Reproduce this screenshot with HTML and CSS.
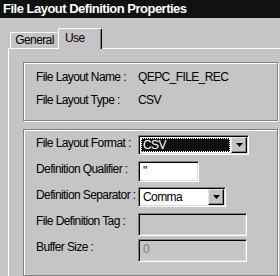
FILE: index.html
```html
<!DOCTYPE html>
<html lang="en">

<head>
    <meta charset="UTF-8">
    <title>File Layout Definition Properties</title>
    <link rel="stylesheet" href="styles.css">
</head>

<body>
    <div class="titlebar">File Layout Definition Properties</div>

    <div class="tabs">
        <div class="tab tab-general">General</div>
        <div class="tab tab-use">Use</div>
    </div>

    <div class="panel">
        <div class="group group-info">
            <div class="row">
                <span class="label">File Layout Name :</span>
                <span class="value">QEPC_FILE_REC</span>
            </div>
            <div class="row">
                <span class="label">File Layout Type :</span>
                <span class="value">CSV</span>
            </div>
        </div>

        <div class="group group-props">
            <div class="row row-tall">
                <span class="label">File Layout Format :</span>
                <div class="combo combo-format">
                    <span class="combo-text selected"><span>CSV</span></span>
                    <span class="combo-btn"><svg width="7" height="4" viewBox="0 0 7 4"><path d="M0 0h7L3.5 4z" fill="#000"/></svg></span>
                </div>
            </div>
            <div class="row row-tall">
                <span class="label">Definition Qualifier :</span>
                <div class="textbox textbox-qualifier">"</div>
            </div>
            <div class="row row-tall">
                <span class="label">Definition Separator :</span>
                <div class="combo combo-separator">
                    <span class="combo-text">Comma</span>
                    <span class="combo-btn"><svg width="7" height="4" viewBox="0 0 7 4"><path d="M0 0h7L3.5 4z" fill="#000"/></svg></span>
                </div>
            </div>
            <div class="row row-tall">
                <span class="label">File Definition Tag :</span>
                <div class="textbox textbox-wide disabled"></div>
            </div>
            <div class="row row-tall">
                <span class="label">Buffer Size :</span>
                <div class="textbox textbox-wide disabled">0</div>
            </div>
        </div>
    </div>
</body>

</html>
```

FILE: styles.css
```css
/* Ventana general */
body {
    margin: 0;
    width: 280px;
    height: 276px;
    overflow: hidden;
    background-color: #c5c5c5;
    color: #000;
    font-family: "Liberation Sans", Arial, sans-serif;
    font-size: 12px;
    letter-spacing: -0.6px;
    white-space: nowrap;
}

.titlebar {
    height: 18px;
    line-height: 18px;
    padding-left: 3px;
    background-color: #111;
    color: #fff;
    font-weight: bold;
    font-size: 13px;
    letter-spacing: -0.5px;
}

/* Pestañas */
.tabs {
    display: flex;
    align-items: flex-end;
    margin: 10px 0 -1px 10px;
    height: 21px;
}

.tab {
    box-sizing: border-box;
    border-top: 1px solid #fff;
    border-left: 1px solid #fff;
    border-radius: 2px 2px 0 0;
    background-color: #c5c5c5;
}

.tab-general {
    width: 48px;
    height: 16px;
    margin-bottom: 1px;
    line-height: 15px;
    text-align: center;
}

.tab-use {
    position: relative;
    z-index: 1;
    width: 44px;
    height: 21px;
    padding: 2px 0 0 6px;
    line-height: 14px;
    border-right: 1px solid #000;
    box-shadow: inset -1px 0 0 #808080;
}

/* Panel */
.panel {
    box-sizing: border-box;
    border-top: 1px solid #fff;
    border-left: 1px solid #fff;
    margin-left: 8px;
    height: 228px;
    padding: 13px 0 0 14px;
}

.group {
    box-sizing: border-box;
    width: 255px;
    border: 1px solid #808080;
    box-shadow: inset 1px 1px 0 #fff, 1px 1px 0 #fff;
    padding-left: 12px;
}

.group-info {
    height: 59px;
    padding-top: 3px;
}

.group-props {
    margin-top: 8px;
    height: 147px;
}

.row {
    display: flex;
    height: 23px;
    line-height: 23px;
}

.row-tall {
    height: 26px;
    line-height: 26px;
}

.label {
    width: 102px;
    flex-shrink: 0;
}

/* Controles */
.combo,
.textbox {
    box-sizing: border-box;
    margin-top: 5px;
    border: 1px solid;
    border-color: #808080 #fff #fff #808080;
    box-shadow: inset 1px 1px 0 #000, inset -1px -1px 0 #d8d8d8;
    background-color: #fff;
    line-height: 15px;
}

.combo {
    display: flex;
    padding: 2px;
    height: 20px;
}

.combo-format {
    width: 111px;
}

.combo-separator {
    width: 88px;
    height: 20px;
}

.combo-text {
    flex: 1;
    padding-left: 2px;
    line-height: 14px;
}

.combo-text.selected {
    background-color: #111;
    color: #fff;
    outline: 1px dotted #fff;
    outline-offset: -1px;
    margin-right: 1px;
}

.combo-btn {
    box-sizing: border-box;
    width: 16px;
    height: 16px;
    margin: -1px -1px 0 0;
    display: flex;
    align-items: center;
    justify-content: center;
    background-color: #c5c5c5;
    border: 1px solid;
    border-color: #e8e8e8 #000 #000 #e8e8e8;
    box-shadow: inset -1px -1px 0 #808080;
}

.textbox {
    height: 21px;
    padding: 2px 4px;
}

.textbox-qualifier {
    width: 61px;
}

.textbox-wide {
    width: 109px;
    height: 23px;
}

.textbox.disabled {
    background-color: #c5c5c5;
    color: #808080;
}
```
